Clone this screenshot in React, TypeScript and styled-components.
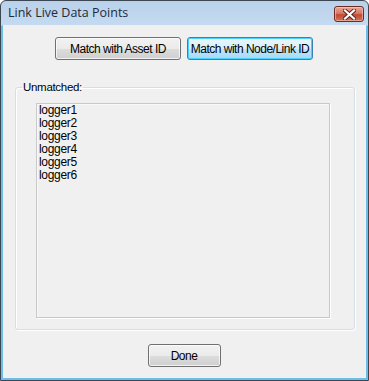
import React from "react";
import styled, { createGlobalStyle } from "styled-components";

const GlobalStyle = createGlobalStyle`
  html, body {
    margin: 0;
    padding: 0;
    background: #ffffff;
  }
`;

const UI_FONT = "'Liberation Sans', Arial, sans-serif";

const Window = styled.div`
  width: 369px;
  height: 381px;
  box-sizing: border-box;
  display: flex;
  flex-direction: column;
  border: 1px solid #3c4650;
  border-radius: 6px 6px 0 0;
  background: linear-gradient(to bottom, #b9d1ea 0px, #c5daf0 24px, #6cbde7 25px);
  padding: 0 2px 2px 2px;
  font-family: ${UI_FONT};
  font-size: 11px;
  color: #000;
`;

const TitleBar = styled.div`
  height: 24px;
  display: flex;
  align-items: center;
  justify-content: space-between;
  padding: 0 2px 0 5px;
`;

const Title = styled.span`
  font-family: "Open Sans", "Liberation Sans", sans-serif;
  font-size: 12.5px;
  color: #1e2b3a;
  margin-top: -1px;
`;

const CloseButton = styled.div`
  width: 30px;
  height: 16px;
  box-sizing: border-box;
  margin-top: 2px;
  border: 1px solid #6e2a20;
  border-radius: 3px;
  display: flex;
  align-items: center;
  justify-content: center;
  background: linear-gradient(to bottom, #e8a696 0%, #d77a68 45%, #c24a34 55%, #d0735c 100%);
  box-shadow: inset 0 0 0 1px rgba(255, 220, 210, 0.5);
`;

const Client = styled.div`
  flex: 1;
  display: flex;
  flex-direction: column;
  background: #f0f0f0;
  padding: 12px 11px 11px 12px;
`;

const ButtonRow = styled.div`
  display: flex;
  justify-content: center;
  gap: 6px;
  padding-right: 2px;
`;

const Button = styled.button<{ $width: number; $focused?: boolean }>`
  width: ${(p) => p.$width}px;
  height: 23px;
  box-sizing: border-box;
  padding: 0;
  font-family: ${UI_FONT};
  font-size: 12px;
  letter-spacing: -0.5px;
  color: #000;
  border-radius: 3px;
  border: 1px solid ${(p) => (p.$focused ? "#3c7fb1" : "#707070")};
  background: ${(p) =>
    p.$focused
      ? "linear-gradient(to bottom, #eaf6fd 0%, #d9f0fc 50%, #bee6fd 51%, #a7d9f5 100%)"
      : "linear-gradient(to bottom, #f2f2f2 0%, #ebebeb 50%, #dddddd 51%, #cfcfcf 100%)"};
  box-shadow: inset 0 0 0 1px
    ${(p) => (p.$focused ? "#48d2fd" : "rgba(255,255,255,0.7)")};
`;

const Group = styled.fieldset`
  flex: 1;
  margin: 21px 0 0 0;
  padding: 10px 24px 11px 20px;
  border: 1px solid #d5dfe5;
  border-radius: 3px;
  box-shadow: inset 1px 1px 0 #ffffff, 1px 1px 0 #ffffff;
  display: flex;
  flex-direction: column;
  min-height: 0;
`;

const Legend = styled.legend`
  padding: 0 1px;
  margin-left: -14px;
  font-size: 11.5px;
  letter-spacing: -0.3px;
  color: #000;
`;

const ListBox = styled.div`
  flex: 1;
  border: 1px solid #c9c9c9;
  box-shadow: 1px 1px 0 #ffffff, inset 1px 1px 0 #f8f8f8;
  padding: 0 2px;
  display: flex;
  flex-direction: column;
`;

const ListItem = styled.div`
  height: 13px;
  line-height: 13px;
  font-size: 12px;
  letter-spacing: -0.3px;
`;

const Footer = styled.div`
  display: flex;
  justify-content: center;
  padding-top: 14px;
  padding-right: 2px;
`;

const CloseGlyph = () => (
  <svg width="13" height="11" viewBox="0 0 13 11">
    <path
      d="M2 1.5 L11 9.5 M11 1.5 L2 9.5"
      stroke="#5a2017"
      strokeWidth="4"
      strokeLinecap="square"
    />
    <path
      d="M2 1.5 L11 9.5 M11 1.5 L2 9.5"
      stroke="#ffffff"
      strokeWidth="2.2"
      strokeLinecap="square"
    />
  </svg>
);

const loggers = ["logger1", "logger2", "logger3", "logger4", "logger5", "logger6"];

export default function App() {
  return (
    <>
      <GlobalStyle />
      <Window>
        <TitleBar>
          <Title>Link Live Data Points</Title>
          <CloseButton>
            <CloseGlyph />
          </CloseButton>
        </TitleBar>
        <Client>
          <ButtonRow>
            <Button $width={126}>Match with Asset ID</Button>
            <Button $width={126} $focused>
              Match with Node/Link ID
            </Button>
          </ButtonRow>
          <Group>
            <Legend>Unmatched:</Legend>
            <ListBox>
              {loggers.map((name) => (
                <ListItem key={name}>{name}</ListItem>
              ))}
            </ListBox>
          </Group>
          <Footer>
            <Button $width={73}>Done</Button>
          </Footer>
        </Client>
      </Window>
    </>
  );
}
